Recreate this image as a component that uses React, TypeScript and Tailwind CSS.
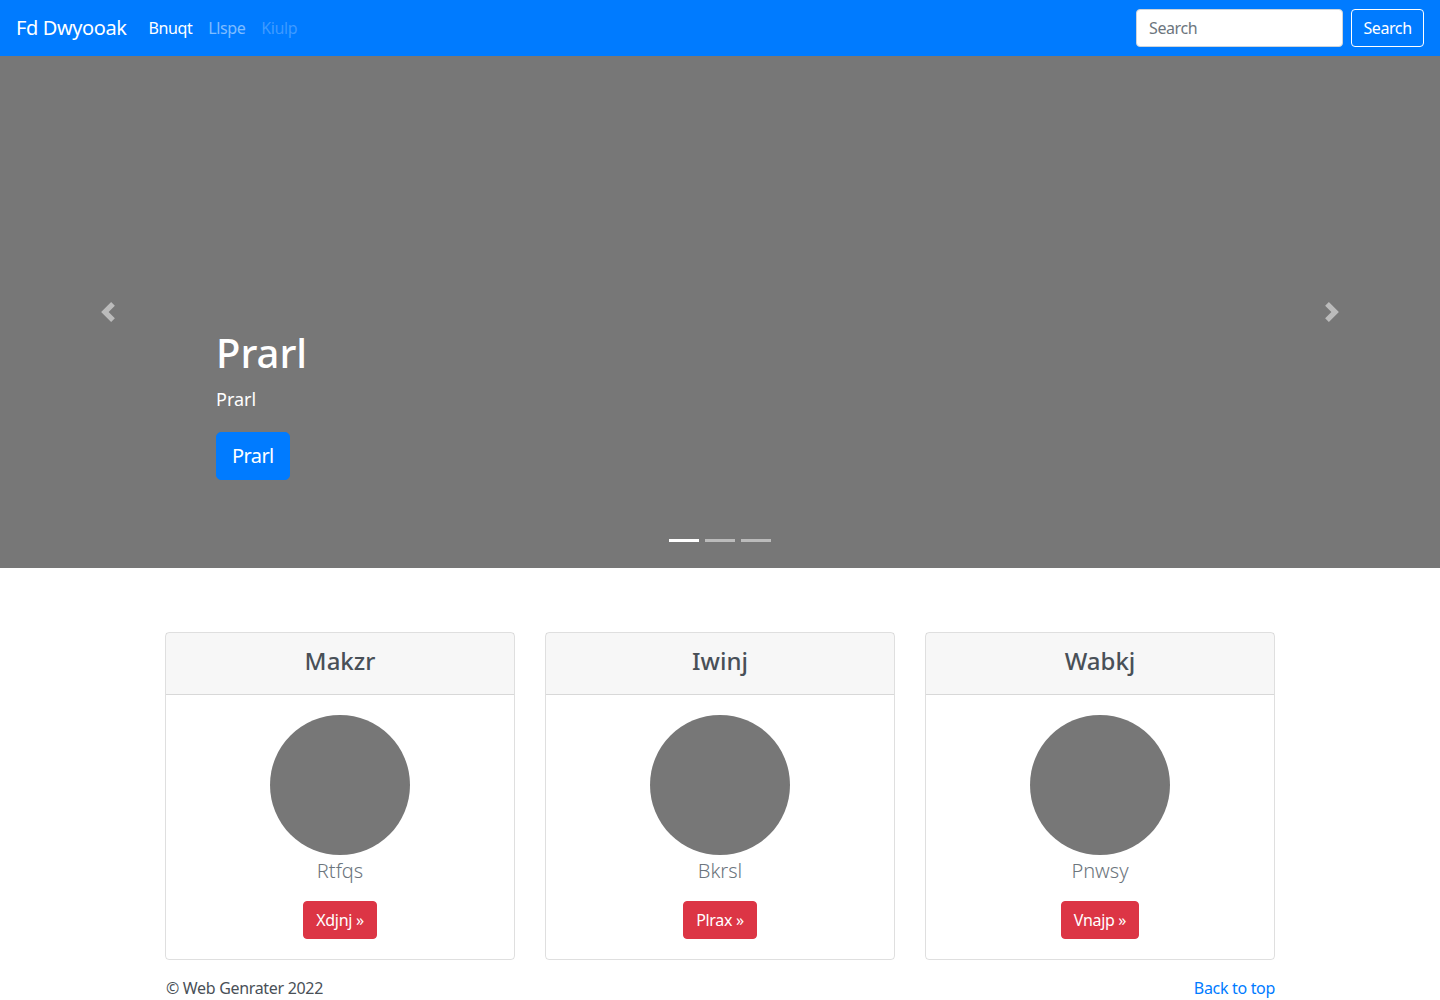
import React from "react";

const cards = [
  { title: "Makzr", name: "Rtfqs", action: "Xdjnj" },
  { title: "Iwinj", name: "Bkrsl", action: "Plrax" },
  { title: "Wabkj", name: "Pnwsy", action: "Vnajp" },
];

function Chevron({ dir }: { dir: "left" | "right" }) {
  return (
    <svg width="20" height="20" viewBox="0 0 8 8" className="opacity-50">
      {dir === "left" ? (
        <path fill="#fff" d="M5.25 0l-4 4 4 4 1.5-1.5L4.25 4l2.5-2.5L5.25 0z" />
      ) : (
        <path fill="#fff" d="M2.75 0l-1.5 1.5L3.75 4l-2.5 2.5L2.75 8l4-4-4-4z" />
      )}
    </svg>
  );
}

export default function App() {
  return (
    <div
      className="min-h-screen bg-white text-[#212529]"
      style={{ fontFamily: '"Noto Sans", "Open Sans", Arial, sans-serif' }}
    >
      {/* navbar */}
      <nav className="h-14 bg-[#007bff] flex items-center px-4 tracking-[-0.025em]">
        <a className="text-[20px] text-white leading-[30px] mr-[14px]">Fd Dwyooak</a>
        <div className="flex items-center text-[16px]">
          <a className="px-2 py-2 text-white">Bnuqt</a>
          <a className="px-2 py-2 text-white/50">Llspe</a>
          <a className="px-2 py-2 text-white/25">Kiulp</a>
        </div>
        <div className="ml-auto flex items-center gap-2">
          <input
            placeholder="Search"
            className="w-[207px] h-[38px] rounded bg-white px-3 text-[16px] text-[#495057] placeholder:text-[#6c757d] border border-[#ced4da] outline-none"
          />
          <button className="h-[38px] w-[73px] rounded border border-white text-white text-[16px]">
            Search
          </button>
        </div>
      </nav>

      {/* carousel */}
      <div className="relative h-[512px] bg-[#777] flex">
        <div className="w-[15%] flex items-center justify-center">
          <Chevron dir="left" />
        </div>
        <div className="flex-1 flex flex-col justify-end pb-[88px] text-white">
          <h1 className="text-[40px] leading-[48px] font-medium mb-[10px] -mt-[3px]">Prarl</h1>
          <p className="text-[18px] leading-[27px] mb-[19px] -mt-[1px]">Prarl</p>
          <div>
            <a className="inline-block bg-[#007bff] border border-[#007bff] rounded-[5px] px-[15px] py-2 text-[20px] leading-[30px] text-white tracking-[-0.03em]">
              Prarl
            </a>
          </div>
        </div>
        <div className="w-[15%] flex items-center justify-center">
          <Chevron dir="right" />
        </div>
        <div className="absolute left-0 right-0 bottom-[26px] flex justify-center gap-[6px]">
          <span className="w-[30px] h-[3px] bg-white" />
          <span className="w-[30px] h-[3px] bg-white/50" />
          <span className="w-[30px] h-[3px] bg-white/50" />
        </div>
      </div>

      {/* cards */}
      <div className="w-[1110px] mx-auto mt-16 grid grid-cols-3 gap-[30px]">
        {cards.map((c) => (
          <div key={c.title} className="border border-black/[0.125] rounded flex flex-col">
            <div className="bg-black/[0.03] border-b border-black/[0.125] pt-[13px] pb-[19px] text-center">
              <h4 className="text-[24px] leading-[29px] font-medium text-[#495057]">{c.title}</h4>
            </div>
            <div className="p-5 flex flex-col items-center">
              <div className="w-[140px] h-[140px] rounded-full bg-[#777]" />
              <p className="text-[20px] leading-[30px] font-light text-[#6c757d] mb-[15px] pt-[1px]">{c.name}</p>
              <a className="inline-block bg-[#dc3545] border border-[#dc3545] text-white rounded px-3 py-[6px] text-[16px] leading-[24px] tracking-[-0.02em]">
                {c.action} &raquo;
              </a>
            </div>
          </div>
        ))}
      </div>

      {/* footer */}
      <footer className="w-[1110px] mx-auto mt-4 flex justify-between text-[16px] leading-[24px] pb-4 tracking-[-0.02em]">
        <p className="text-[#495057] pl-px">&copy; Web Genrater 2022</p>
        <a className="text-[#007bff]">Back to top</a>
      </footer>
    </div>
  );
}
